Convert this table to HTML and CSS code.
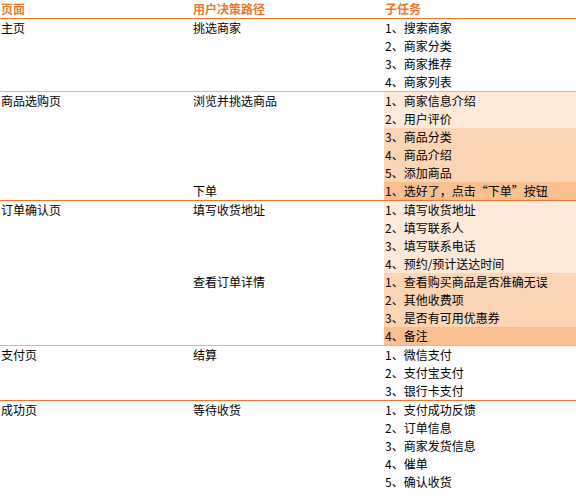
FILE: index.html
```html
<!DOCTYPE html>
<html lang="zh-CN">
<head>
<meta charset="utf-8">
<title>用户决策路径</title>
<link rel="stylesheet" href="styles.css">
</head>
<body>
<div class="sheet">
  <div class="row head">
    <div class="c">页面</div><div class="c">用户决策路径</div><div class="c">子任务</div>
  </div>

  <div class="group b-dark-light">
    <div class="row"><div class="c">主页</div><div class="c">挑选商家</div><div class="c">1、搜索商家</div></div>
    <div class="row"><div class="c"></div><div class="c"></div><div class="c">2、商家分类</div></div>
    <div class="row"><div class="c"></div><div class="c"></div><div class="c">3、商家推荐</div></div>
    <div class="row"><div class="c"></div><div class="c"></div><div class="c">4、商家列表</div></div>
  </div>

  <div class="group b-dark">
    <div class="row"><div class="c">商品选购页</div><div class="c">浏览并挑选商品</div><div class="c t1">1、商家信息介绍</div></div>
    <div class="row"><div class="c"></div><div class="c"></div><div class="c t1">2、用户评价</div></div>
    <div class="row"><div class="c"></div><div class="c"></div><div class="c t2">3、商品分类</div></div>
    <div class="row"><div class="c"></div><div class="c"></div><div class="c t2">4、商品介绍</div></div>
    <div class="row"><div class="c"></div><div class="c"></div><div class="c t2">5、添加商品</div></div>
    <div class="row"><div class="c"></div><div class="c">下单</div><div class="c t3">1、选好了，点击“下单”按钮</div></div>
  </div>

  <div class="group b-light">
    <div class="row"><div class="c">订单确认页</div><div class="c">填写收货地址</div><div class="c t1">1、填写收货地址</div></div>
    <div class="row"><div class="c"></div><div class="c"></div><div class="c t1">2、填写联系人</div></div>
    <div class="row"><div class="c"></div><div class="c"></div><div class="c t1">3、填写联系电话</div></div>
    <div class="row"><div class="c"></div><div class="c"></div><div class="c t1">4、预约/预计送达时间</div></div>
    <div class="row"><div class="c"></div><div class="c">查看订单详情</div><div class="c t2">1、查看购买商品是否准确无误</div></div>
    <div class="row"><div class="c"></div><div class="c"></div><div class="c t2">2、其他收费项</div></div>
    <div class="row"><div class="c"></div><div class="c"></div><div class="c t2">3、是否有可用优惠券</div></div>
    <div class="row"><div class="c"></div><div class="c"></div><div class="c t3">4、备注</div></div>
  </div>

  <div class="group b-dark">
    <div class="row"><div class="c">支付页</div><div class="c">结算</div><div class="c">1、微信支付</div></div>
    <div class="row"><div class="c"></div><div class="c"></div><div class="c">2、支付宝支付</div></div>
    <div class="row"><div class="c"></div><div class="c"></div><div class="c">3、银行卡支付</div></div>
  </div>

  <div class="group">
    <div class="row"><div class="c">成功页</div><div class="c">等待收货</div><div class="c">1、支付成功反馈</div></div>
    <div class="row"><div class="c"></div><div class="c"></div><div class="c">2、订单信息</div></div>
    <div class="row"><div class="c"></div><div class="c"></div><div class="c">3、商家发货信息</div></div>
    <div class="row"><div class="c"></div><div class="c"></div><div class="c">4、催单</div></div>
    <div class="row"><div class="c"></div><div class="c"></div><div class="c">5、确认收货</div></div>
  </div>
</div>
</body>
</html>
```
FILE: styles.css
```css
html, body {
  margin: 0;
  padding: 0;
  background: #ffffff;
}

body {
  font-family: "Noto Sans CJK SC", "Noto Sans", sans-serif;
  font-size: 12px;
  color: #000000;
}

.sheet {
  width: 576px;
  display: flex;
  flex-direction: column;
}

.row {
  display: grid;
  grid-template-columns: 192px 192px 192px;
  height: 18px;
  line-height: 18px;
}

.c {
  padding-left: 1px;
  white-space: nowrap;
  overflow: hidden;
}

.head {
  box-sizing: content-box;
  height: 18px;
  border-bottom: 1px solid #e8792f;
  color: #e8792f;
  font-weight: bold;
}

.group {
  display: flex;
  flex-direction: column;
}

.b-dark-light {
  border-bottom: 1px solid #f4b183;
}

.b-light {
  border-bottom: 1px solid #f4b183;
}

.b-dark {
  border-bottom: 1px solid #e8792f;
}

.t1 { background: #fde9d9; }
.t2 { background: #fcd5b4; }
.t3 { background: #fabf8f; }
```
